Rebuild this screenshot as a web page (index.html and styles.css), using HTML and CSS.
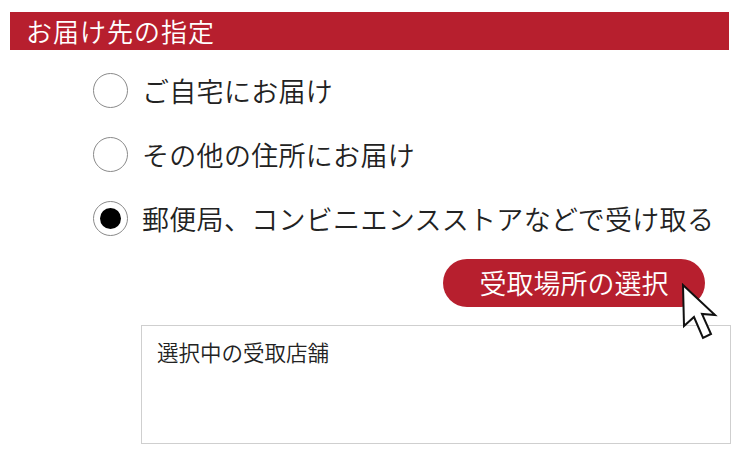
FILE: index.html
```html
<!DOCTYPE html>
<html lang="ja">
<head>
<meta charset="utf-8">
<link rel="stylesheet" href="styles.css">
</head>
<body>
<div class="page">
  <div class="header">お届け先の指定</div>
  <div class="options">
    <div class="option"><span class="radio"></span><span class="label">ご自宅にお届け</span></div>
    <div class="option"><span class="radio"></span><span class="label">その他の住所にお届け</span></div>
    <div class="option"><span class="radio checked"></span><span class="label">郵便局、コンビニエンスストアなどで受け取る</span></div>
  </div>
  <div class="actions">
    <div class="btn-wrap">
      <button class="btn">受取場所の選択</button>
      <svg class="cursor" width="40" height="60" viewBox="0 0 40 60">
        <path d="M3 2 L4 43 L14 34 L23 55 L31 51 L22 31 L35 32 Z" fill="#fff" stroke="#111" stroke-width="2" stroke-linejoin="miter"/>
      </svg>
    </div>
  </div>
  <div class="store-box">選択中の受取店舗</div>
</div>
</body>
</html>
```
FILE: styles.css
```css
html, body {
  margin: 0;
  padding: 0;
  background: #fff;
}
body {
  font-family: "Noto Sans CJK JP", "Noto Sans", sans-serif;
  color: #222;
}
.page {
  width: 740px;
  height: 460px;
  padding-top: 12px;
  box-sizing: border-box;
  display: flex;
  flex-direction: column;
}
.header {
  margin: 0 11px 0 10px;
  height: 38px;
  background: #b71f2e;
  color: #fff;
  font-size: 26px;
  font-weight: 350;
  line-height: 38px;
  padding-left: 16px;
  letter-spacing: 1px;
}
.options {
  display: flex;
  flex-direction: column;
  padding: 8px 0 0 93px;
}
.option {
  height: 64px;
  display: flex;
  align-items: center;
  gap: 14px;
}
.radio {
  width: 35px;
  height: 35px;
  box-sizing: border-box;
  border: 1.5px solid #8a8a8a;
  border-radius: 50%;
  display: flex;
  align-items: center;
  justify-content: center;
  flex: none;
}
.radio.checked::after {
  content: "";
  width: 21px;
  height: 21px;
  border-radius: 50%;
  background: #000;
}
.label {
  font-size: 27px;
  font-weight: 350;
  letter-spacing: 0.3px;
  line-height: 1;
  color: #222;
}
.actions {
  display: flex;
  justify-content: flex-end;
  padding: 9px 35px 0 0;
}
.btn-wrap {
  position: relative;
}
.btn {
  width: 262px;
  height: 48px;
  border: none;
  border-radius: 24px;
  background: #b71f2e;
  color: #fff;
  font-family: inherit;
  font-size: 27px;
  font-weight: 350;
  line-height: 48px;
  padding: 0;
  display: block;
}
.cursor {
  position: absolute;
  left: 237px;
  top: 24px;
}
.store-box {
  margin: 18px 9px 0 141px;
  height: 119px;
  box-sizing: border-box;
  border: 1.5px solid #cfcfcf;
  padding: 12px 15px;
  font-size: 21.5px;
  font-weight: 350;
  line-height: 1.3;
  color: #222;
}
```
